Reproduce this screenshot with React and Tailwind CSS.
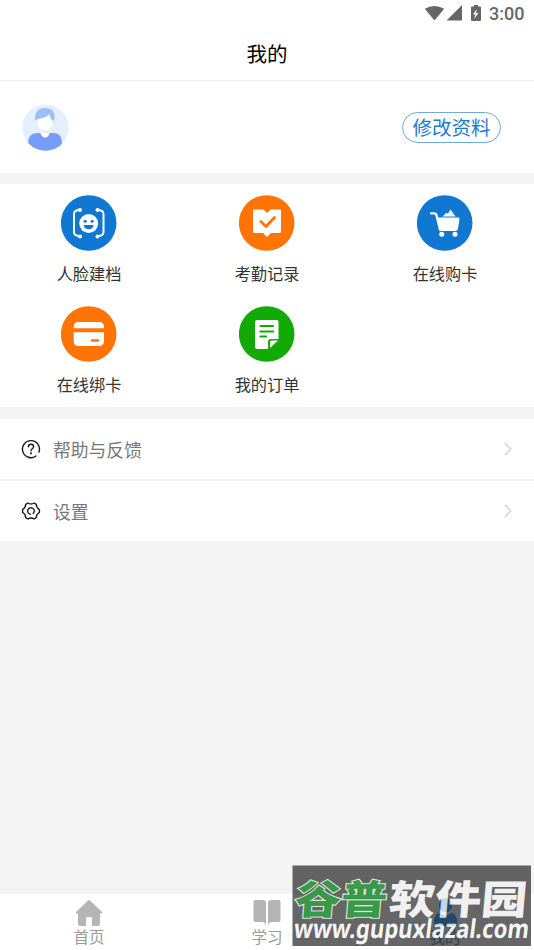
import React from "react";

const Circle = ({ color, children }) => (
  <svg className="block h-14 w-14" viewBox="0 0 56 56" fill="none">
    <circle cx="27.700" cy="28" r="27.800" fill={color} />
    {children}
  </svg>
);

const FaceIcon = () => (
  <Circle color="#1078d2">
    <path d="M19 14.500l-4 1.300q-2 .8-2 3v18.400q0 2.200 2 3l4 1.300M36.500 14.500l4 1.300q2 .8 2 3v18.400q0 2.200-2 3l-4 1.300" stroke="#fff" strokeWidth="2" />
    <g fill="#fff">
      <circle cx="19" cy="15" r="2" />
      <circle cx="36.500" cy="15" r="2" />
      <circle cx="19" cy="41.500" r="2" />
      <circle cx="36.500" cy="41.500" r="2" />
      <circle cx="27.700" cy="28.500" r="9.400" />
    </g>
    <circle cx="24.200" cy="26.300" r="1.500" fill="#1078d2" />
    <circle cx="31.200" cy="26.300" r="1.500" fill="#1078d2" />
    <path d="M22.700 30h10q-.8 4.300-5 4.300t-5-4.300z" fill="#1078d2" />
  </Circle>
);

const AttendanceIcon = () => (
  <Circle color="#ff7404">
    <path d="M15 14.500h9.500l3.500 3.500 3.500-3.500H41q1 0 1 1v21q0 1.500-1.500 1.500H32l-4 4-4-4h-8.500Q14 38 14 36.500v-21q0-1 1-1z" fill="#fff" />
    <path d="M21.800 26.500l5.200 5 8.500-9" stroke="#ff7404" strokeWidth="2.800" strokeLinecap="round" strokeLinejoin="round" />
  </Circle>
);

const CartIcon = () => (
  <Circle color="#1078d2">
    <path d="M14 18.300h3.200q1.700 0 2.200 1.600L23 35" stroke="#fff" strokeWidth="2.200" strokeLinecap="round" />
    <path d="M20.200 22.500H41q1.700 0 1.500 1.700l-1.500 9.500q-.4 2.300-2.800 2.300H25.200q-2 0-2.400-2zM25.500 21.500l3.500-3.500 2 .5 2.500-4 5 7z" fill="#fff" />
    <circle cx="24.700" cy="39.300" r="2.500" fill="#fff" />
    <circle cx="38" cy="39.300" r="2.500" fill="#fff" />
  </Circle>
);

const CardIcon = () => (
  <Circle color="#ff7404">
    <path d="M17.500 16H38q5 0 5 5v1.200H12.700V21q0-5 4.800-5zM12.700 26.300H43V35q0 5-5 5H17.500q-4.800 0-4.800-5z" fill="#fff" />
    <path d="M31 34.500h6" stroke="#ff7404" strokeWidth="2.400" strokeLinecap="round" />
  </Circle>
);

const OrderIcon = () => (
  <Circle color="#12aa04">
    <path d="M18 14h19.500q2 0 2 2v17H32q-3 0-3 3v7H18q-2 0-2-2V16q0-2 2-2z" fill="#fff" />
    <path d="M31 42v-5.500q0-2 2-2h6z" fill="#fff" />
    <path d="M21.500 20H34M21.500 25.500H34M21.500 30.500H27" stroke="#12aa04" strokeWidth="2.200" strokeLinecap="round" />
  </Circle>
);

const entries = [
  ["人脸建档", FaceIcon],
  ["考勤记录", AttendanceIcon],
  ["在线购卡", CartIcon],
  ["在线绑卡", CardIcon],
  ["我的订单", OrderIcon],
];

const HelpIcon = () => (
  <svg className="h-5 w-5" viewBox="0 0 20 20" fill="none" stroke="#181818" strokeWidth="1.400" strokeLinecap="round">
    <path d="M15 17A8.500 8.500 0 1 1 17.900 13.200" />
    <path d="M7.400 7.800q0-2.600 2.600-2.600t2.600 2.600c0 2-2.600 2-2.600 4" />
    <circle cx="10" cy="14.300" r=".4" fill="#181818" />
  </svg>
);

const SettingsIcon = () => (
  <svg className="h-5 w-5" viewBox="0 0 20 20" fill="none" stroke="#181818" strokeWidth="1.400" strokeLinecap="round" strokeLinejoin="round">
    <path d="M7 2Q10 4 13 2L15.300 3.400Q15.200 6.700 18.400 8.500V11.500Q15.200 13.300 15.300 16.600L13 18Q10 16 7 18L4.700 16.600Q4.800 13.300 1.600 11.500V8.500Q4.800 6.700 4.700 3.400Z" />
    <path d="M9.200 13.200A3.300 3.300 0 1 1 12.300 12.300" />
  </svg>
);

const Row = ({ icon, label }) => (
  <div className="flex h-[60px] items-center bg-white px-[21px]">
    {icon}
    <span className="ml-3 text-[17.800px] leading-6 text-[#777]">{label}</span>
    <svg className="mr-px ml-auto h-[14px] w-2" viewBox="0 0 8 14" fill="none" stroke="#ccc" strokeWidth="1.100">
      <path d="M.8 1l6 6-6 6" />
    </svg>
  </div>
);

const Tab = ({ label, className, children }) => (
  <div className={"flex flex-col items-center pt-[5px] text-[15.500px] leading-5 " + className}>
    <svg className="h-7 w-7 shrink-0" viewBox="0 0 28 28" fill="currentColor">{children}</svg>
    <span className="-mt-px">{label}</span>
  </div>
);

const Watermark = () => (
  <svg className="absolute top-[865px] left-[292px] h-[81px] w-[239px]" viewBox="0 0 239 81">
    <rect x=".5" y=".5" width="238.500" height="80.500" fill="#303030" fillOpacity=".74" />
    <g fontFamily="'Noto Sans CJK SC', sans-serif" fontWeight="900" fontSize="43" transform="translate(2 49) skewX(-5) scale(1 .93)">
      <text x="0" y="0" textLength="92" lengthAdjust="spacingAndGlyphs" fill="#38994b" stroke="#dce7dc" strokeWidth="2.200" paintOrder="stroke">谷普</text>
      <text x="94" y="0" textLength="138" lengthAdjust="spacingAndGlyphs" fill="#fff" fillOpacity=".92">软件园</text>
    </g>
    <g transform="translate(1 73) skewX(-7)">
      <text x="0" y="0" textLength="235" lengthAdjust="spacingAndGlyphs" fontFamily="'Noto Sans', sans-serif" fontWeight="700" fontSize="26" fill="#fff" fillOpacity=".94">www.gupuxlazal.com</text>
    </g>
    {/* faint tint of the active tab showing through the lettering */}
    <g fill="#0f6fc4" fillOpacity=".18">
      <ellipse cx="153.500" cy="40" rx="6.500" ry="7" />
      <path d="M147 48l6.500 3 6.500-3q5 2 5 8.500 0 4.500-4 4.500h-15q-4 0-4-4.500 0-6.500 5-8.500z" />
    </g>
  </svg>
);

export default function App() {
  return (
    <div className="relative flex h-[950px] w-[534px] flex-col overflow-hidden bg-[#f4f4f4] font-['Noto_Sans_CJK_SC',sans-serif]">
      <div className="flex h-7 shrink-0 items-center justify-end bg-white pr-[10px] text-[#666]">
        <svg className="h-5 w-[62px]" viewBox="0 0 62 20" fill="currentColor">
          <path d="M.8 4.800Q10.500-1 20.200 4.800L10.500 16.500zM38 1v15.500H22.500zM48 2.500h2V1h4v1.500h2q1 0 1 1V16q0 1-1 1h-8q-1 0-1-1V3.500q0-1 1-1z" />
          <path d="M53 5l-4 5.500h2.500L50 15l4.500-6H52z" fill="#fff" />
        </svg>
        <span className="ml-[3px] w-[35px] font-['Roboto',sans-serif] text-[18px] leading-5 font-medium whitespace-nowrap">3:00</span>
      </div>
      <header className="flex h-[53px] shrink-0 items-center justify-center border-b border-[#eee] bg-white pb-[2px] text-[20.500px] text-black">我的</header>
      <section className="flex h-[92px] shrink-0 items-center bg-white pr-[33px] pl-[22px]">
        <svg className="h-[47px] w-[47px]" viewBox="0 0 47 47">
          <defs>
            <clipPath id="avatar"><circle cx="23.500" cy="23.500" r="23.200" /></clipPath>
          </defs>
          <g clipPath="url(#avatar)">
            <circle cx="23.500" cy="23.500" r="23.200" fill="#e4efff" />
            <path d="M6 47v-7q0-11 9-11h17q8 0 8 11v7z" fill="#789cfc" />
            <path d="M18.500 24h9v5q-1 4.500-4.500 4.500T18.500 29z" fill="#fff" />
            <path d="M18.500 26h9v1.500q-4.500 2.500-9 0z" fill="#dfe7fa" />
            <path d="M15 15l12-6 4 8q-.5 10-8 10-8 0-8-12z" fill="#fff" />
            <path d="M13.200 16.500Q12 4.200 23 4q9.800.2 9.800 9 0 2.500-1.300 4.300-3-2-4.300-7-3 3.300-7.200 3.700-3.800.5-6.800 2.500z" fill="#9bbff6" />
          </g>
        </svg>
        <button className="ml-auto flex h-[31px] w-[99px] items-center justify-center rounded-full border border-[#70a8dc] text-[19.500px] leading-none whitespace-nowrap text-[#1c7bce]">修改资料</button>
      </section>
      <section className="mt-[11px] grid h-[223px] shrink-0 grid-cols-3 grid-rows-[111px_111px] bg-white">
        {entries.map(([label, Icon]) => (
          <div key={label} className="flex flex-col items-center pt-[11px]">
            <Icon />
            <span className="mt-[10px] text-[16.200px] leading-6 text-[#333]">{label}</span>
          </div>
        ))}
      </section>
      <section className="mt-3 flex shrink-0 flex-col gap-[2px]">
        <Row icon={<HelpIcon />} label="帮助与反馈" />
        <Row icon={<SettingsIcon />} label="设置" />
      </section>
      <nav className="mt-auto grid h-14 shrink-0 grid-cols-3 bg-white">
        <Tab label="首页" className="text-[#999]">
          <path fill="#b5b5b5" d="M13 1.500q1-1 2 0L27 13q1 1.500-1 1.500h-1V25q0 2-2 2h-6v-8q0-1-1-1h-4q-1 0-1 1v8H5q-2 0-2-2V14.500H2q-2 0-1-1.500z" />
        </Tab>
        <Tab label="学习" className="text-[#999]">
          <path fill="#b5b5b5" d="M2.500 1H10q3 0 3 2.500V27q-.7-4-4-4H2.500Q.5 23 .5 21V3q0-2 2-2zM25.500 1H18q-3 0-3 2.500V27q.7-4 4-4h6.500q2 0 2-2V3q0-2-2-2z" />
        </Tab>
        <Tab label="我的" className="text-[#0f6fc4]">
          <ellipse cx="14.500" cy="6.500" rx="6.500" ry="7" />
          <path d="M8 14l6.500 3 6.500-3q5 2 5 8.500 0 4.500-4 4.500H7q-4 0-4-4.500Q3 16 8 14z" />
        </Tab>
      </nav>
      <Watermark />
    </div>
  );
}
